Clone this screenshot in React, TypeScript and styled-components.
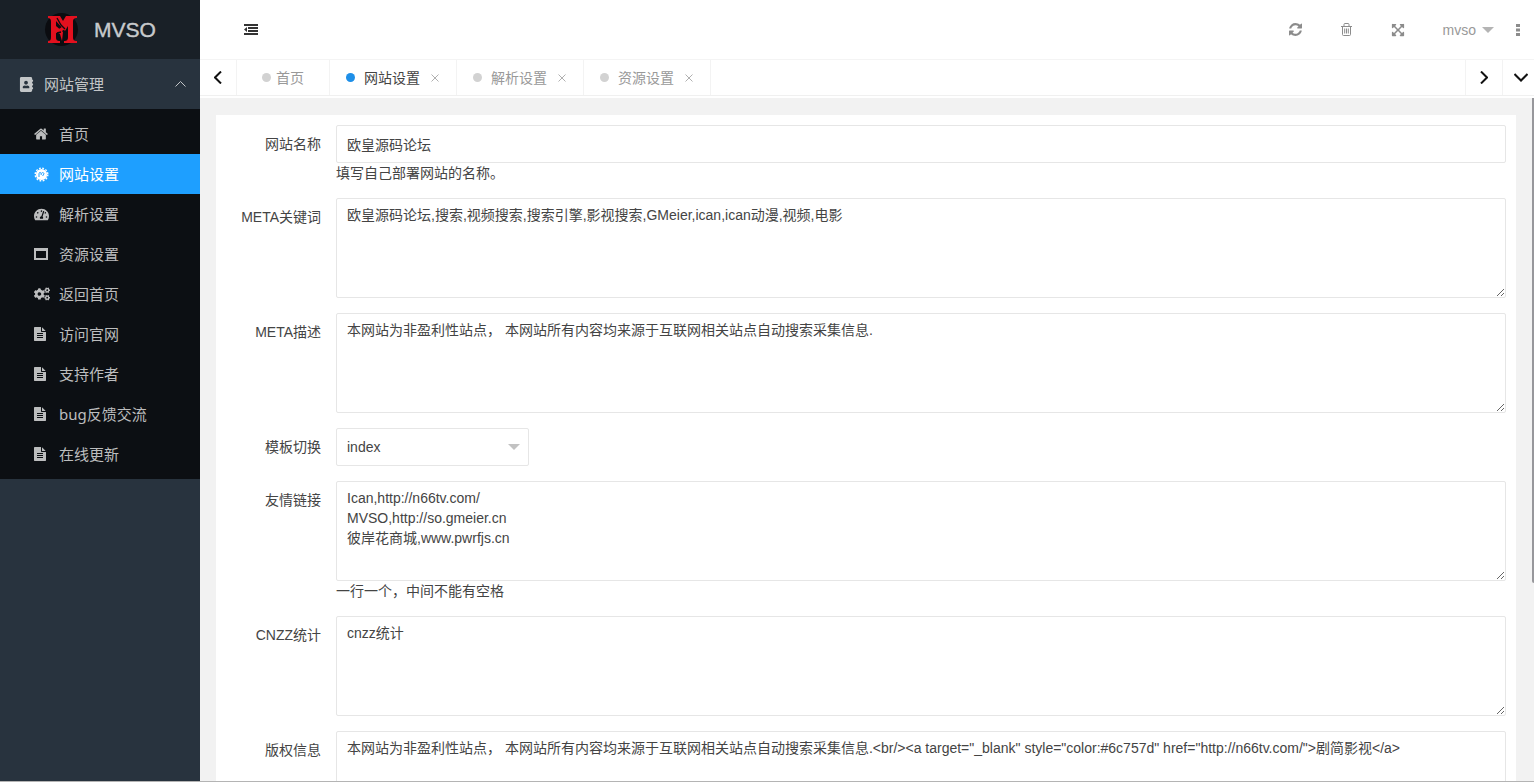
import React from "react";
import styled, { createGlobalStyle } from "styled-components";
import { FaAddressBook, FaCogs, FaExpandArrowsAlt, FaTachometerAlt } from "react-icons/fa";

const GlobalStyle = createGlobalStyle`
  * { box-sizing: border-box; }
  body {
    margin: 0;
    overflow: hidden;
    color: #444;
    background: #fff;
    font: 14px/20px "Liberation Sans", "Noto Sans CJK SC", sans-serif;
  }
  a { color: inherit; text-decoration: none; }
  button { padding: 0; border: 0; background: none; font: inherit; color: inherit; cursor: pointer; }
  input, textarea, select { font: inherit; color: inherit; }
  svg { display: block; flex: none; }
`;

const Shell = styled.div`
  display: flex;
  height: 100vh;
  border-bottom: 1px solid #b4b4b4;
`;

const Sidebar = styled.aside`
  flex: none;
  width: 200px;
  background: #28333e;
  color: #c3c6c8;
  font-family: "Noto Sans", "Noto Sans CJK SC", sans-serif;
  font-size: 15px;
`;

const Brand = styled.a`
  display: flex;
  align-items: center;
  gap: 14px;
  height: 59px;
  padding-left: 43px;
  background: #192027;
  color: #c8cacc;
  font-family: "Liberation Sans", sans-serif;
  font-size: 21px;
  -webkit-text-stroke: 0.4px #c8cacc;
`;

const GroupButton = styled.button`
  display: flex;
  align-items: center;
  gap: 10px;
  width: 100%;
  height: 50px;
  padding: 0 14px 0 19px;
  text-align: left;
`;

const GroupName = styled.span`
  flex: 1;
`;

const Menu = styled.nav`
  padding: 5px 0;
  background: #0c0f13;
`;

const MenuLink = styled.a<{ $active?: boolean }>`
  display: flex;
  align-items: center;
  gap: 9px;
  height: 40px;
  padding-left: 34px;
  background: ${(p) => (p.$active ? "#1e9fff" : "transparent")};
  color: ${(p) => (p.$active ? "#fff" : "#bcbdbe")};
`;

const IconSlot = styled.span`
  display: flex;
  justify-content: flex-start;
  width: 16px;
`;

const Main = styled.main`
  display: flex;
  flex: 1;
  flex-direction: column;
  min-width: 0;
`;

const Toolbar = styled.header`
  display: flex;
  align-items: center;
  height: 59px;
  padding: 0 14px 0 43px;
  color: #8c8c8c;
`;

const FoldButton = styled.button`
  margin-right: auto;
  color: #333;
`;

const Tools = styled.div`
  display: flex;
  align-items: center;
  gap: 38px;
`;

const UserButton = styled.button`
  display: flex;
  align-items: center;
  gap: 6px;
  color: #999;
`;

const MoreButton = styled.button`
  margin-left: -16px;
`;

const Caret = styled.span`
  border: 6px solid transparent;
  border-top-color: #b4b4b4;
  border-bottom: 0;
`;

const TabBar = styled.div`
  display: flex;
  flex: none;
  height: 37px;
  border-top: 1px solid #f4f4f4;
  border-bottom: 1px solid #f0f0f0;
`;

const ArrowButton = styled.button<{ $side: "left" | "right" }>`
  display: flex;
  align-items: center;
  justify-content: center;
  width: 37px;
  border-${(p) => (p.$side === "left" ? "right" : "left")}: 1px solid #f3f3f3;
  color: #111;
`;

const DropButton = styled(ArrowButton)`
  justify-content: flex-end;
  width: 32px;
  padding-right: 6px;
`;

const TabList = styled.div`
  display: flex;
  flex: 1;
`;

const Tab = styled.div<{ $active?: boolean; $home?: boolean }>`
  display: flex;
  align-items: center;
  gap: ${(p) => (p.$home ? 5 : 9)}px;
  padding: 0 ${(p) => (p.$home ? 25 : 16)}px;
  padding-right: ${(p) => (p.$home ? 25 : 17)}px;
  border-right: 1px solid #f3f3f3;
  color: ${(p) => (p.$active ? "#444" : "#999")};
`;

const Dot = styled.span<{ $active?: boolean }>`
  width: 9px;
  height: 9px;
  border-radius: 50%;
  background: ${(p) => (p.$active ? "#1e8fe8" : "#d2d2d2")};
`;

const CloseButton = styled.button`
  margin-left: 2px;
  color: #b0b0b0;
`;

const Workspace = styled.div`
  position: relative;
  flex: 1;
  min-height: 0;
  margin-top: 2px;
  padding: 17px 18px 0 16px;
  overflow: hidden;
  background: #f2f2f2;
`;

const ScrollThumb = styled.span`
  position: absolute;
  top: 0;
  right: 0;
  width: 2px;
  height: 71%;
  border-radius: 0 0 0 2px;
  background: #97979b;
`;

const Card = styled.form`
  display: flex;
  flex-direction: column;
  gap: 15px;
  padding: 10px 10px 15px 0;
  background: #fff;
`;

const FormRow = styled.div`
  display: flex;
  align-items: flex-start;
`;

const Label = styled.label`
  flex: none;
  width: 120px;
  padding: 9px 15px 9px 0;
  text-align: right;
`;

const FieldBody = styled.div`
  flex: 1;
  min-width: 0;
`;

const Hint = styled.p`
  margin: 0;
`;

const TextInput = styled.input`
  display: block;
  width: 100%;
  height: 38px;
  padding: 0 10px;
  border: 1px solid #e6e6e6;
  border-radius: 2px;
  background: #fff;
`;

const TextArea = styled.textarea`
  display: block;
  width: 100%;
  height: 100px;
  padding: 6px 10px;
  border: 1px solid #e6e6e6;
  border-radius: 2px;
  background: #fff;
  line-height: 20px;
  resize: vertical;
`;

const SelectWrap = styled.div`
  display: flex;
  position: relative;
  align-items: center;
  width: 193px;

  ${Caret} {
    position: absolute;
    right: 9px;
    border-top-color: #c2c2c2;
    pointer-events: none;
  }
`;

const Select = styled.select`
  width: 100%;
  height: 38px;
  padding: 0 30px 0 10px;
  border: 1px solid #e6e6e6;
  border-radius: 2px;
  background: #fff;
  appearance: none;
`;

const Logo = () => (
  <svg width="37" height="36" viewBox="0 0 37 36" aria-hidden="true">
    <circle cx="18.500" cy="17.500" r="16.500" fill="#0b0c10" />
    <g fill="#e3101e">
      <path d="M5 4h12l3 5 3-5h11v2c-3 0-4 1-4 4v15c0 3 1 4 4 4v2H21v-2c3 0 4-1 4-4V14l-3 5-9-10v16c0 3 1 4 4 4v2H5v-2c2 0 3-1 3-4V10c0-3-1-4-3-4z" />
      <path d="M13 18c4-1 7-3 9-9l3 3c-2 5-6 8-12 9z" />
      <path d="M13 14l7 6-1 9-2-7-4-2z" />
    </g>
    <path d="M14 6l4 7 4 4M14 21l4-1" fill="none" stroke="#0b0c10" strokeWidth="1.300" />
  </svg>
);

const HomeIcon = () => (
  <svg width="14" height="14" viewBox="64 128 1664 1536" fill="currentColor" aria-hidden="true">
    <path d="M1472 992v480q0 26-19 45t-45 19h-384v-384h-256v384h-384q-26 0-45-19t-19-45v-480q0-1 .5-3t.5-3l575-474 575 474q1 2 1 6zm223-69l-62 74q-8 9-21 11h-3q-13 0-21-7l-692-577-692 577q-12 8-24 7-13-2-21-11l-62-74q-8-10-7-23.500t11-21.500l719-599q32-26 76-26t76 26l244 204v-195q0-14 9-23t23-9h192q14 0 23 9t9 23v408l219 182q10 8 11 21.500t-7 23.500z" />
  </svg>
);

const FileIcon = () => (
  <svg width="14" height="14" viewBox="128 0 1792 1792" fill="currentColor" aria-hidden="true">
    <path d="M1596 476q14 14 28 36h-472v-472q22 14 36 28zm-476 164h544v1056q0 40-28 68t-68 28h-1344q-40 0-68-28t-28-68v-1600q0-40 28-68t68-28h800v544q0 40 28 68t68 28zm160 736v-64q0-14-9-23t-23-9h-704q-14 0-23 9t-9 23v64q0 14 9 23t23 9h704q14 0 23-9t9-23zm0-256v-64q0-14-9-23t-23-9h-704q-14 0-23 9t-9 23v64q0 14 9 23t23 9h704q14 0 23-9t9-23zm0-256v-64q0-14-9-23t-23-9h-704q-14 0-23 9t-9 23v64q0 14 9 23t23 9h704q14 0 23-9t9-23z" />
  </svg>
);

const BadgeGearIcon = () => (
  <svg width="15" height="15" viewBox="0 0 15 15" aria-hidden="true">
    <circle cx="7.500" cy="7.500" r="5.600" fill="currentColor" />
    <circle cx="7.500" cy="7.500" r="6.300" fill="none" stroke="currentColor" strokeWidth="1.400" strokeDasharray="1.800 1.500" />
    <path d="M5 10V6.200c1-1.300 2-.7 2.200.3V8M7.200 6.500c1-1.500 3.200-1 2.600.6L8.600 9" fill="none" stroke="#1e9fff" strokeWidth="1" />
  </svg>
);

const WindowIcon = () => (
  <svg width="14" height="12" viewBox="0 0 14 12" aria-hidden="true">
    <path fill="currentColor" fillRule="evenodd" d="M0 0h14v12H0zM2 3v7h10V3z" />
  </svg>
);

const RefreshIcon = () => (
  <svg width="13" height="13" viewBox="128 128 1536 1536" fill="currentColor" aria-hidden="true">
    <path d="M1639 1056q0 5-1 7-64 268-268 434.500t-478 166.500q-146 0-282.500-55t-243.500-157l-129 129q-19 19-45 19t-45-19-19-45v-448q0-26 19-45t45-19h448q26 0 45 19t19 45-19 45l-137 137q71 66 161 102t187 36q134 0 250-65t186-179q11-17 53-117 8-23 30-23h192q13 0 22.500 9.500t9.500 22.500zm25-800v448q0 26-19 45t-45 19h-448q-26 0-45-19t-19-45 19-45l138-138q-148-137-349-137-134 0-250 65t-186 179q-11 17-53 117-8 23-30 23h-199q-13 0-22.500-9.500t-9.500-22.500v-7q65-268 270-434.500t480-166.500q146 0 284 55.500t245 156.500l130-129q19-19 45-19t45 19 19 45z" />
  </svg>
);

const TrashIcon = () => (
  <svg width="13" height="13" viewBox="0 0 13 13" fill="none" stroke="currentColor" aria-hidden="true">
    <path d="M1 3.500h11M4 3V1.500q0-1 1-1h3q1 0 1 1V3M2.500 3.500v8q0 1 1 1h6q1 0 1-1v-8M4.700 5.500v5M6.500 5.500v5M8.300 5.500v5" />
  </svg>
);

const FoldIcon = () => (
  <svg width="15" height="11" viewBox="0 0 15 11" fill="currentColor" aria-hidden="true">
    <path d="M1 0h14v2H1zM5 3h10v2H5zM5 6h10v2H5zM1 9h14v2H1zM4 3v5L1 5.500z" />
  </svg>
);

const MoreIcon = () => (
  <svg width="4" height="12" viewBox="0 0 4 12" fill="currentColor" aria-hidden="true">
    <path d="M0 0h4v3H0zM0 4.500h4v3H0zM0 9h4v3H0z" />
  </svg>
);

const chevrons = {
  left: { w: 8, h: 13, d: "M7 .5l-6 6 6 6" },
  right: { w: 8, h: 13, d: "M1 .5l6 6-6 6" },
  down: { w: 14, h: 9, d: "M.5 1L7 7.500 13.500 1" },
  up: { w: 11, h: 6, d: "M.5 5.500l5-5 5 5" },
};

const Chevron = ({ to, weight = 1 }: { to: keyof typeof chevrons; weight?: number }) => {
  const { w, h, d } = chevrons[to];
  return (
    <svg width={w} height={h} viewBox={`0 0 ${w} ${h}`} fill="none" stroke="currentColor" strokeWidth={weight} aria-hidden="true">
      <path d={d} />
    </svg>
  );
};

const CloseIcon = () => (
  <svg width="8" height="8" viewBox="0 0 8 8" fill="none" stroke="currentColor" aria-hidden="true">
    <path d="M.5.500l7 7M7.500.500l-7 7" />
  </svg>
);

const menuItems = [
  { name: "首页", icon: <HomeIcon /> },
  { name: "网站设置", icon: <BadgeGearIcon />, active: true },
  { name: "解析设置", icon: <FaTachometerAlt size={15} /> },
  { name: "资源设置", icon: <WindowIcon /> },
  { name: "返回首页", icon: <FaCogs size={16} /> },
  { name: "访问官网", icon: <FileIcon /> },
  { name: "支持作者", icon: <FileIcon /> },
  { name: "bug反馈交流", icon: <FileIcon /> },
  { name: "在线更新", icon: <FileIcon /> },
];

const tabs = [
  { name: "首页", home: true },
  { name: "网站设置", active: true },
  { name: "解析设置" },
  { name: "资源设置" },
];

type FieldProps = { id: string; label: string; hint?: string; children: React.ReactNode };

const Field = ({ id, label, hint, children }: FieldProps) => (
  <FormRow>
    <Label htmlFor={id}>{label}</Label>
    <FieldBody>
      {children}
      {hint && <Hint>{hint}</Hint>}
    </FieldBody>
  </FormRow>
);

export default function App() {
  return (
    <>
      <GlobalStyle />
      <Shell>
        <Sidebar>
          <Brand href="#">
            <Logo />
            MVSO
          </Brand>
          <GroupButton type="button" aria-expanded="true">
            <FaAddressBook size={15} />
            <GroupName>网站管理</GroupName>
            <Chevron to="up" />
          </GroupButton>
          <Menu>
            {menuItems.map((item) => (
              <MenuLink key={item.name} href="#" $active={item.active}>
                <IconSlot>{item.icon}</IconSlot>
                {item.name}
              </MenuLink>
            ))}
          </Menu>
        </Sidebar>
        <Main>
          <Toolbar>
            <FoldButton type="button" aria-label="侧边伸缩"><FoldIcon /></FoldButton>
            <Tools>
              <button type="button" aria-label="刷新"><RefreshIcon /></button>
              <button type="button" aria-label="清理"><TrashIcon /></button>
              <button type="button" aria-label="全屏"><FaExpandArrowsAlt size={14} /></button>
              <UserButton type="button">mvso<Caret /></UserButton>
              <MoreButton type="button" aria-label="更多"><MoreIcon /></MoreButton>
            </Tools>
          </Toolbar>
          <TabBar>
            <ArrowButton type="button" $side="left" aria-label="向左"><Chevron to="left" weight={2} /></ArrowButton>
            <TabList>
              {tabs.map((tab) => (
                <Tab key={tab.name} $active={tab.active} $home={tab.home}>
                  <Dot $active={tab.active} />
                  <a href="#">{tab.name}</a>
                  {!tab.home && <CloseButton type="button" aria-label={`关闭${tab.name}`}><CloseIcon /></CloseButton>}
                </Tab>
              ))}
            </TabList>
            <ArrowButton type="button" $side="right" aria-label="向右"><Chevron to="right" weight={2} /></ArrowButton>
            <DropButton type="button" $side="right" aria-label="标签操作"><Chevron to="down" weight={2} /></DropButton>
          </TabBar>
          <Workspace>
            <Card>
              <Field id="name" label="网站名称" hint="填写自己部署网站的名称。">
                <TextInput id="name" defaultValue="欧皇源码论坛" />
              </Field>
              <Field id="keywords" label="META关键词">
                <TextArea id="keywords" defaultValue="欧皇源码论坛,搜索,视频搜索,搜索引擎,影视搜索,GMeier,ican,ican动漫,视频,电影" />
              </Field>
              <Field id="description" label="META描述">
                <TextArea id="description" defaultValue="本网站为非盈利性站点， 本网站所有内容均来源于互联网相关站点自动搜索采集信息." />
              </Field>
              <Field id="template" label="模板切换">
                <SelectWrap>
                  <Select id="template" defaultValue="index"><option>index</option></Select>
                  <Caret />
                </SelectWrap>
              </Field>
              <Field id="links" label="友情链接" hint="一行一个，中间不能有空格">
                <TextArea id="links" defaultValue={"Ican,http://n66tv.com/\nMVSO,http://so.gmeier.cn\n彼岸花商城,www.pwrfjs.cn"} />
              </Field>
              <Field id="stats" label="CNZZ统计">
                <TextArea id="stats" defaultValue="cnzz统计" />
              </Field>
              <Field id="copyright" label="版权信息">
                <TextArea
                  id="copyright"
                  defaultValue={'本网站为非盈利性站点， 本网站所有内容均来源于互联网相关站点自动搜索采集信息.<br/><a target="_blank" style="color:#6c757d" href="http://n66tv.com/">剧简影视</a>'}
                />
              </Field>
            </Card>
            <ScrollThumb />
          </Workspace>
        </Main>
      </Shell>
    </>
  );
}
